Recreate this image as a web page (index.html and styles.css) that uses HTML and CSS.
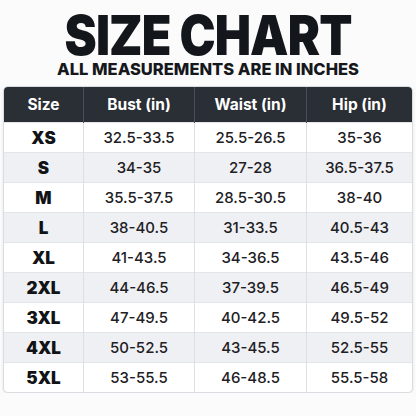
FILE: index.html
```html
<!DOCTYPE html>
<html lang="en">
<head>
    <meta charset="UTF-8">
    <meta name="viewport" content="width=device-width, initial-scale=1.0">
    <title>Size Chart</title>
    <link rel="stylesheet" href="styles.css">
</head>
<body>

<div class="page">
    <h1 class="title">SIZE CHART</h1>
    <p class="subtitle">ALL MEASUREMENTS ARE IN INCHES</p>

    <!-- Tabla de medidas -->
    <div class="chart">
        <table>
            <thead>
                <tr>
                    <th class="col-size">Size</th>
                    <th class="col-bust">Bust (in)</th>
                    <th class="col-waist">Waist (in)</th>
                    <th>Hip (in)</th>
                </tr>
            </thead>
            <tbody>
                <tr><td class="size">XS</td><td>32.5-33.5</td><td>25.5-26.5</td><td>35-36</td></tr>
                <tr><td class="size">S</td><td>34-35</td><td>27-28</td><td>36.5-37.5</td></tr>
                <tr><td class="size">M</td><td>35.5-37.5</td><td>28.5-30.5</td><td>38-40</td></tr>
                <tr><td class="size">L</td><td>38-40.5</td><td>31-33.5</td><td>40.5-43</td></tr>
                <tr><td class="size">XL</td><td>41-43.5</td><td>34-36.5</td><td>43.5-46</td></tr>
                <tr><td class="size">2XL</td><td>44-46.5</td><td>37-39.5</td><td>46.5-49</td></tr>
                <tr><td class="size">3XL</td><td>47-49.5</td><td>40-42.5</td><td>49.5-52</td></tr>
                <tr><td class="size">4XL</td><td>50-52.5</td><td>43-45.5</td><td>52.5-55</td></tr>
                <tr><td class="size">5XL</td><td>53-55.5</td><td>46-48.5</td><td>55.5-58</td></tr>
            </tbody>
        </table>
    </div>
</div>

</body>
</html>
```

FILE: styles.css
```css
body {
    font-family: Inter, "Noto Sans", sans-serif;
    background-color: #fbfbfb;
    color: #1b1d21;
    margin: 0;
}
.page {
    padding: 12px 4px 0;
    display: flex;
    flex-direction: column;
    align-items: center;
}
.title {
    margin: 0;
    font-size: 55px;
    font-weight: 900;
    line-height: 46px;
    letter-spacing: -1px;
    color: #13161b;
    transform: scaleX(0.88);
}
.subtitle {
    margin: 1px 0 7px;
    font-size: 16.5px;
    font-weight: 800;
    line-height: 20px;
    color: #16181c;
}
.chart {
    width: 408px;
    border: 1px solid #d9dce0;
    border-radius: 5px;
    overflow: hidden;
    background-color: #fff;
    box-shadow: 0 1px 3px rgba(0, 0, 0, 0.08);
}
table {
    width: 100%;
    border-collapse: collapse;
    table-layout: fixed;
}
th {
    background-color: #2a2e35;
    color: #fff;
    font-size: 15.5px;
    font-weight: 700;
    height: 35px;
    padding: 0;
    border-left: 1px solid #4a4f57;
}
th:first-child, td:first-child {
    border-left: none;
}
.col-size { width: 79px; }
.col-bust { width: 110px; }
.col-waist { width: 111px; }
td {
    height: 29px;
    padding: 0;
    text-align: center;
    font-size: 15px;
    font-weight: 500;
    color: #1e2024;
    border-left: 1px solid #dcdfe3;
    border-top: 1px solid #e3e5e8;
}
tbody tr:nth-child(even) td {
    background-color: #eef0f3;
}
td.size {
    font-size: 17px;
    font-weight: 900;
    color: #111317;
}
```
